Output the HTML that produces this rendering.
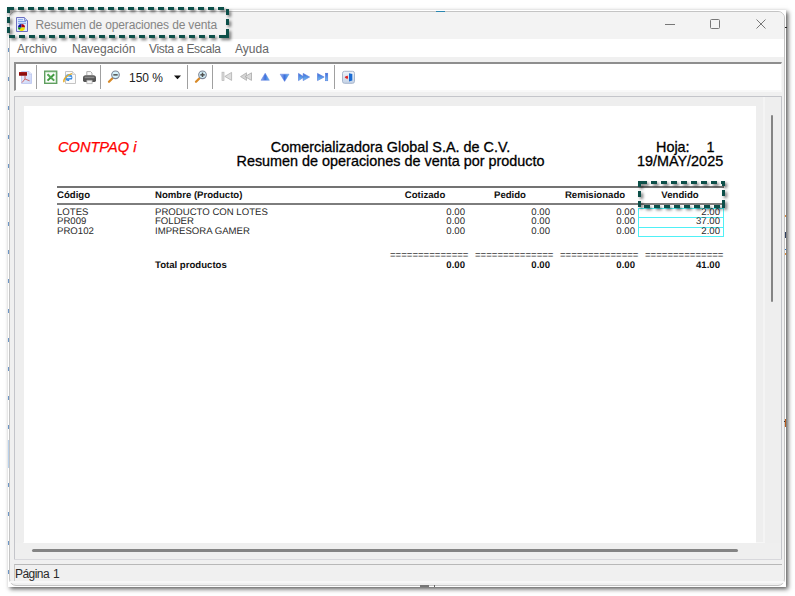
<!DOCTYPE html>
<html><head><meta charset="utf-8">
<style>
*{margin:0;padding:0;box-sizing:border-box}
html,body{width:795px;height:596px;overflow:hidden;background:#fff;font-family:"Liberation Sans",sans-serif;position:relative}
.a{position:absolute}
.t{position:absolute;white-space:nowrap;line-height:1}
#outer{left:8px;top:10px;width:778px;height:577px;background:#fff;box-shadow:2px 2px 4.5px rgba(0,0,0,.66)}
#win{left:9px;top:11px;width:776px;height:575px;border:1px solid #c4c4c4;border-radius:7px;background:#f0f0f0;overflow:hidden}
.r{font-size:14.4px;color:#000;-webkit-text-stroke:0.3px #000}
.h{font-size:9.6px;font-weight:bold;color:#111;text-rendering:geometricPrecision}
.d{font-size:9.6px;color:#2a2a2a;text-rendering:geometricPrecision}
.rt{text-align:right}
</style></head><body>
<div id="outer" class="a"></div>
<div id="win" class="a">
  <div class="a" style="left:0;top:0;width:100%;height:27px;background:#f3f3f3"></div>
  <div class="a" style="left:0;top:27px;width:100%;height:18px;background:#fff"></div>
</div>
<!-- title bar -->
<svg class="a" style="left:16px;top:17px" width="12" height="15" viewBox="0 0 12 15">
  <path d="M0.5 0.5H8.5L11.5 3.5V14.5H0.5Z" fill="#dfeaff" stroke="#6d6fc0"/>
  <path d="M8.5 0.5V3.5H11.5" fill="#bcd0f5" stroke="#8a8fd0"/>
  <rect x="2" y="2.2" width="5" height="1" fill="#7ea4e6"/>
  <rect x="2" y="4" width="8" height="1" fill="#7ea4e6"/>
  <rect x="2" y="5.8" width="8" height="1" fill="#7ea4e6"/>
  <path d="M5.5 10.5L5.5 7A3.5 3.5 0 0 0 2 10.5Z" fill="#0a0aa0"/>
  <path d="M5.5 10.5L5.5 7A3.5 3.5 0 0 1 9 10.5Z" fill="#b00010"/>
  <path d="M5.5 10.5L9 10.5A3.5 3.5 0 0 1 3 13Z" fill="#f0e000"/>
  <path d="M5.5 10.5L3 13A3.5 3.5 0 0 1 2 10.5Z" fill="#0a8a10"/>
</svg>
<div class="t" style="left:35.5px;top:19px;font-size:12px;color:#858585;letter-spacing:-0.15px">Resumen de operaciones de venta</div>
<svg class="a" style="left:660px;top:15px" width="115" height="20">
  <rect x="5" y="9" width="10" height="1" fill="#777"/>
  <rect x="50.5" y="4.5" width="9" height="9" rx="1" fill="none" stroke="#777"/>
  <path d="M96.5 4.5L105.5 13.5M105.5 4.5L96.5 13.5" stroke="#777" stroke-width="1"/>
</svg>
<!-- menu -->
<div class="t" style="left:17px;top:42.5px;font-size:12px;color:#666">Archivo</div>
<div class="t" style="left:72px;top:42.5px;font-size:12px;color:#666">Navegación</div>
<div class="t" style="left:149px;top:42.5px;font-size:12px;color:#666;letter-spacing:-0.3px">Vista a Escala</div>
<div class="t" style="left:235px;top:42.5px;font-size:12px;color:#666">Ayuda</div>
<!-- toolbar box -->
<div class="a" style="left:14px;top:62px;width:768px;height:29px;background:#fff;border-top:2px solid #8e8e8e;border-left:2px solid #8e8e8e;border-right:1px solid #f6f6f6;border-bottom:1px solid #f8f8f8"></div><div class="a" style="left:14px;top:91px;width:768px;height:1px;background:#f8f8f8"></div>
<div class="a" style="left:36px;top:65px;width:1px;height:24px;background:#a0a0a0"></div>
<div class="a" style="left:100px;top:65px;width:1px;height:24px;background:#a0a0a0"></div>
<div class="a" style="left:187px;top:65px;width:1px;height:24px;background:#a0a0a0"></div>
<div class="a" style="left:212px;top:65px;width:1px;height:24px;background:#a0a0a0"></div>
<div class="a" style="left:334px;top:65px;width:1px;height:24px;background:#a0a0a0"></div>
<!-- toolbar icons -->
<svg class="a" style="left:0;top:0" width="400" height="100">
  <defs>
    <linearGradient id="gpdf" x1="0" y1="0" x2="1" y2="1"><stop offset="0" stop-color="#eef2ff"/><stop offset="1" stop-color="#c9d4f6"/></linearGradient>
    <linearGradient id="gblue" x1="0" y1="0" x2="1" y2="0"><stop offset="0" stop-color="#9fb6f0"/><stop offset=".5" stop-color="#3f6fdc"/><stop offset="1" stop-color="#6fc8f0"/></linearGradient>
    <linearGradient id="gblue2" x1="0" y1="0" x2="0" y2="1"><stop offset="0" stop-color="#3a66d8"/><stop offset="1" stop-color="#74c6f2"/></linearGradient>
    <radialGradient id="gie" cx=".4" cy=".35" r=".7"><stop offset="0" stop-color="#8fd0ff"/><stop offset="1" stop-color="#1c6fd0"/></radialGradient>
    <linearGradient id="gexit" x1="0" y1="0" x2="0" y2="1"><stop offset="0" stop-color="#eef3fa"/><stop offset="1" stop-color="#c4d2e6"/></linearGradient>
  </defs>
  <!-- pdf -->
  <path d="M21.5 71.5H29L31.5 74V83.5H21.5Z" fill="url(#gpdf)" stroke="#c4cdf2"/>
  <path d="M29 71.5V74H31.5" fill="#fff" stroke="#b8c2ee" stroke-width=".8"/>
  <rect x="19" y="72" width="8" height="3.8" rx=".6" fill="#8c0a0a"/>
  <rect x="19.5" y="72.2" width="7" height="1" fill="#a82020"/>
  <path d="M25 76V79M25 79L22 82.6M25 79L29.6 80.8" stroke="#c85a5a" stroke-width=".9" fill="none"/>
  <!-- excel -->
  <rect x="44.7" y="71.2" width="12" height="12.1" fill="#fbfefb" stroke="#5f9f5f" stroke-width="1.4"/>
  <path d="M45.6 72.2H55.8V82.4" fill="none" stroke="#8cc48c" stroke-width=".5"/>
  <path d="M47.5 74.2L54.2 80.6M54.2 74.2L47.5 80.6" stroke="#3f9a3f" stroke-width="2"/>
  <path d="M48 74.6L53.8 80.2" stroke="#8fd08f" stroke-width=".5"/>
  <!-- ie -->
  <path d="M65.5 71.5H72.5L75.5 74.5V83.5H65.5Z" fill="#fbfbfb" stroke="#c4c4c4"/>
  <path d="M72.5 71.5V74.5H75.5" fill="#ececec" stroke="#c8c8c8" stroke-width=".8"/>
  <circle cx="68.8" cy="77.6" r="3.5" fill="url(#gie)"/>
  <path d="M67 77.1H71.4V78H67Z" fill="#fff"/>
  <path d="M69.5 79.4H72.4V81H69Z" fill="#fff"/>
  <path d="M64 82.3C62.8 80 66.5 74.6 72 73.6" stroke="#e6ac28" stroke-width="1.3" fill="none"/>
  <!-- printer -->
  <path d="M86.8 75V71.6H90.6L92 73V75" fill="#fafafa" stroke="#9a9a9a" stroke-width=".8"/>
  <path d="M83 78Q83 75.3 85.8 75.3H93.2Q96 75.3 96 78V80.6Q96 82 94.6 82H84.4Q83 82 83 80.6Z" fill="#555"/>
  <rect x="84.6" y="76.6" width="9.8" height="1.6" fill="#8c8c8c"/>
  <path d="M86.8 80.2H92.2V83.6H86.8Z" fill="#f4f4f4" stroke="#999" stroke-width=".6"/>
  <!-- zoom out -->
  <path d="M112.5 78.2L109 81.8" stroke="#d88a28" stroke-width="2.3" stroke-linecap="round"/>
  <circle cx="115.5" cy="74.8" r="3.8" fill="#d6f2fb" stroke="#7c8496" stroke-width="1.1"/>
  <rect x="113.3" y="74.1" width="4.4" height="1.5" fill="#505050"/>
  <!-- dropdown -->
  <path d="M174 75.5H181L177.5 79.3Z" fill="#111"/>
  <!-- zoom in -->
  <path d="M199.5 78.2L196 81.8" stroke="#d88a28" stroke-width="2.3" stroke-linecap="round"/>
  <circle cx="202.5" cy="74.8" r="3.8" fill="#d6f2fb" stroke="#7c8496" stroke-width="1.1"/>
  <rect x="200.3" y="74.1" width="4.4" height="1.5" fill="#505050"/>
  <rect x="201.75" y="72.6" width="1.5" height="4.4" fill="#505050"/>
  <!-- first -->
  <rect x="222" y="72.2" width="2" height="8.4" fill="#dcdcdc" stroke="#b4b4b4" stroke-width=".7"/>
  <path d="M224.8 76.4L231.6 72.4V80.4Z" fill="#dedede" stroke="#b0b0b0" stroke-width=".8"/>
  <!-- prev -->
  <path d="M240.5 76.6L246.5 72.8V80.4Z" fill="#d4d4d4" stroke="#b0b0b0" stroke-width=".8"/>
  <path d="M245 76.6L251.5 72.8V80.4Z" fill="#dadada" stroke="#aaaaaa" stroke-width=".8"/>
  <!-- up -->
  <path d="M265.2 73.2L269.3 80.3H261Z" fill="url(#gblue)" stroke="#5a7ee0" stroke-width=".5"/>
  <!-- down -->
  <path d="M280.2 74.2H289L284.6 81.4Z" fill="url(#gblue)" stroke="#5a7ee0" stroke-width=".5"/>
  <!-- next -->
  <path d="M298.5 73.4V80.6L304 77Z" fill="url(#gblue2)" stroke="#4f74dc" stroke-width=".6"/>
  <path d="M303.2 73.4V80.6L309.6 77Z" fill="url(#gblue2)" stroke="#4f74dc" stroke-width=".6"/>
  <!-- last -->
  <path d="M317.5 73.4V80.6L324.2 77Z" fill="url(#gblue2)" stroke="#4f74dc" stroke-width=".6"/>
  <rect x="325.4" y="73.2" width="2.4" height="7.6" fill="url(#gblue2)" stroke="#4f74dc" stroke-width=".5"/>
  <!-- exit -->
  <rect x="342.5" y="71.3" width="12" height="12" rx="2" fill="url(#gexit)" stroke="#a8b6cc" stroke-width="1"/>
  <path d="M349 73.2L352.3 74V80.6L349 81.4Z" fill="#1a6cd4"/>
  <path d="M344.6 77.3L347.6 75.4V79.2Z" fill="#e02424"/>
  <rect x="345.5" y="76.4" width="2.5" height="1.8" fill="#e02424"/>
</svg>
<div class="t" style="left:129px;top:72px;font-size:12px;color:#222">150 %</div>
<!-- preview frame -->
<div class="a" style="left:14px;top:96px;width:768px;height:464px;background:#eeeeee;border:1px solid #c4c5ca"></div>
<div class="a" style="left:763px;top:97px;width:2px;height:446px;background:#f4f4f4"></div><div class="a" style="left:15px;top:543px;width:766px;height:16px;background:#efefef"></div><div class="a" style="left:23px;top:542px;width:742px;height:1px;background:#f6f6f6"></div>
<div class="a" style="left:770.5px;top:115px;width:2.5px;height:187px;background:#848484;border-radius:1.5px"></div>
<div class="a" style="left:32px;top:549px;width:706px;height:2.5px;background:#848484;border-radius:1.5px"></div>
<!-- page -->
<div class="a" style="left:23.5px;top:106px;width:732.5px;height:437px;background:#fff"></div>
<!-- report -->
<div class="t" style="left:58px;top:139.5px;font-size:14.6px;font-style:italic;color:#ff0000;-webkit-text-stroke:0.25px #f00">CONTPAQ i</div>
<div class="t r" style="left:190px;width:401px;text-align:center;top:139.5px">Comercializadora Global S.A. de C.V.</div>
<div class="t r" style="left:190px;width:401px;text-align:center;top:153.5px">Resumen de operaciones de venta por producto</div>
<div class="t r" style="left:656px;top:139.5px">Hoja:</div>
<div class="t r" style="left:706.5px;top:139.5px">1</div>
<div class="t r" style="left:637px;top:153.5px">19/MAY/2025</div>
<div class="a" style="left:57px;top:186px;width:667px;height:2px;background:#737373"></div>
<div class="a" style="left:57px;top:203px;width:667px;height:2px;background:#7d7d7d"></div>
<div class="t h" style="left:57px;top:191px">Código</div>
<div class="t h" style="left:155px;top:191px">Nombre (Producto)</div>
<div class="t h" style="left:385px;width:80px;text-align:center;top:191px">Cotizado</div>
<div class="t h" style="left:470px;width:80px;text-align:center;top:191px">Pedido</div>
<div class="t h" style="left:555px;width:80px;text-align:center;top:191px">Remisionado</div>
<div class="t h" style="left:640px;width:80px;text-align:center;top:191px">Vendido</div>
<div class="t d" style="left:57px;top:207.5px;line-height:9.5px">LOTES<br>PR009<br>PRO102</div>
<div class="t d" style="left:155px;top:207.5px;line-height:9.5px">PRODUCTO CON LOTES<br>FOLDER<br>IMPRESORA GAMER</div>
<div class="t d rt" style="left:385px;width:80px;top:207.5px;line-height:9.5px">0.00<br>0.00<br>0.00</div>
<div class="t d rt" style="left:470px;width:80px;top:207.5px;line-height:9.5px">0.00<br>0.00<br>0.00</div>
<div class="t d rt" style="left:555px;width:80px;top:207.5px;line-height:9.5px">0.00<br>0.00<br>0.00</div>
<div class="a" style="left:638px;top:208px;width:86px;height:29px;border:1px solid #4ff0f6"></div>
<div class="a" style="left:638px;top:217px;width:86px;height:1px;background:#4ff0f6"></div>
<div class="a" style="left:638px;top:227px;width:86px;height:1px;background:#4ff0f6"></div>
<div class="t d rt" style="left:640px;width:80px;top:207.5px;line-height:9.5px">2.00<br>37.00<br>2.00</div>
<div class="t d" style="left:390px;top:251px;color:#3a3a3a">==============</div>
<div class="t d" style="left:475px;top:251px;color:#3a3a3a">==============</div>
<div class="t d" style="left:560px;top:251px;color:#3a3a3a">==============</div>
<div class="t d" style="left:645px;top:251px;color:#3a3a3a">==============</div>
<div class="t h" style="left:155px;top:260.5px">Total productos</div>
<div class="t h rt" style="left:385px;width:80px;top:260.5px">0.00</div>
<div class="t h rt" style="left:470px;width:80px;top:260.5px">0.00</div>
<div class="t h rt" style="left:555px;width:80px;top:260.5px">0.00</div>
<div class="t h rt" style="left:640px;width:80px;top:260.5px">41.00</div>
<!-- status -->
<div class="a" style="left:14px;top:564px;width:768px;height:17px;border-top:1px solid #b8b8b8;border-left:1px solid #c8c8c8"></div><div class="a" style="left:10px;top:581px;width:774px;height:2px;background:#f8f8f8"></div><div class="a" style="left:14px;top:559px;width:768px;height:1px;background:#d8d8dc"></div>
<div class="t" style="left:15px;top:568px;font-size:12px;color:#2a2a2a;letter-spacing:-0.55px">Página</div><div class="t" style="left:53px;top:568px;font-size:12px;color:#2a2a2a">1</div>
<!-- artifacts -->
<div class="a" style="left:8px;top:48px;width:1.2px;height:4px;background:#6d96c6"></div><div class="a" style="left:8px;top:77px;width:1.2px;height:4px;background:#6d96c6"></div><div class="a" style="left:8px;top:106px;width:1.2px;height:4px;background:#6d96c6"></div><div class="a" style="left:8px;top:135px;width:1.2px;height:4px;background:#6d96c6"></div><div class="a" style="left:8px;top:163.5px;width:1.2px;height:4px;background:#6d96c6"></div><div class="a" style="left:8px;top:192.5px;width:1.2px;height:4px;background:#6d96c6"></div><div class="a" style="left:8px;top:222px;width:1.2px;height:4px;background:#6d96c6"></div><div class="a" style="left:8px;top:250px;width:1.2px;height:4px;background:#6d96c6"></div><div class="a" style="left:8px;top:279px;width:1.2px;height:4px;background:#6d96c6"></div><div class="a" style="left:8px;top:308.5px;width:1.2px;height:4px;background:#6d96c6"></div><div class="a" style="left:8px;top:337.5px;width:1.2px;height:4px;background:#6d96c6"></div><div class="a" style="left:8px;top:367px;width:1.2px;height:4px;background:#6d96c6"></div><div class="a" style="left:8px;top:396px;width:1.2px;height:4px;background:#6d96c6"></div><div class="a" style="left:8px;top:425px;width:1.2px;height:4px;background:#6d96c6"></div><div class="a" style="left:8px;top:453px;width:1.2px;height:4px;background:#6d96c6"></div><div class="a" style="left:8px;top:483px;width:1.2px;height:4px;background:#6d96c6"></div><div class="a" style="left:8px;top:511.5px;width:1.2px;height:4px;background:#6d96c6"></div><div class="a" style="left:8px;top:541px;width:1.2px;height:4px;background:#6d96c6"></div><div class="a" style="left:8px;top:569.5px;width:1.2px;height:4px;background:#6d96c6"></div><div class="a" style="left:8px;top:440px;width:1px;height:28px;background:#b8d0ea"></div><div class="a" style="left:436px;top:10.5px;width:9px;height:1.5px;background:#2a86b0"></div><div class="a" style="left:420px;top:585px;width:9px;height:1.5px;background:#777"></div><div class="a" style="left:434px;top:585px;width:1px;height:1.5px;background:#666"></div><div class="a" style="left:785px;top:27px;width:2px;height:1px;background:#222"></div><div class="a" style="left:785px;top:215px;width:1px;height:2px;background:#e09040"></div><div class="a" style="left:784.5px;top:232px;width:1.5px;height:6px;background:#304060"></div><div class="a" style="left:784.5px;top:249px;width:1px;height:1px;background:#3070c0"></div><div class="a" style="left:785px;top:253px;width:1px;height:2px;background:#e09040"></div><div class="a" style="left:785px;top:419px;width:1px;height:8px;background:#b85a1a"></div><div class="a" style="left:784px;top:421px;width:1px;height:1px;background:#333"></div>
<!-- annotation boxes -->
<svg class="a" style="left:0;top:0" width="795" height="596">
  <defs><filter id="sh" x="-10%" y="-50%" width="120%" height="200%"><feDropShadow dx="2" dy="2" stdDeviation="1.6" flood-color="#000" flood-opacity="0.55"/></filter></defs>
  <g fill="#0c4f4a" filter="url(#sh)"><rect x="8" y="7" width="6" height="3"/><rect x="18" y="7" width="6" height="3"/><rect x="28" y="7" width="6" height="3"/><rect x="38" y="7" width="6" height="3"/><rect x="48" y="7" width="6" height="3"/><rect x="58" y="7" width="6" height="3"/><rect x="68" y="7" width="6" height="3"/><rect x="78" y="7" width="6" height="3"/><rect x="88" y="7" width="6" height="3"/><rect x="98" y="7" width="6" height="3"/><rect x="108" y="7" width="6" height="3"/><rect x="118" y="7" width="6" height="3"/><rect x="128" y="7" width="6" height="3"/><rect x="138" y="7" width="6" height="3"/><rect x="148" y="7" width="6" height="3"/><rect x="158" y="7" width="6" height="3"/><rect x="168" y="7" width="6" height="3"/><rect x="178" y="7" width="6" height="3"/><rect x="188" y="7" width="6" height="3"/><rect x="198" y="7" width="6" height="3"/><rect x="208" y="7" width="6" height="3"/><rect x="218" y="7" width="6" height="3"/><rect x="226" y="9" width="3" height="6"/><rect x="226" y="19" width="3" height="6"/><rect x="226" y="29" width="3" height="6"/><rect x="9" y="35" width="6" height="3"/><rect x="19" y="35" width="6" height="3"/><rect x="29" y="35" width="6" height="3"/><rect x="39" y="35" width="6" height="3"/><rect x="49" y="35" width="6" height="3"/><rect x="59" y="35" width="6" height="3"/><rect x="69" y="35" width="6" height="3"/><rect x="79" y="35" width="6" height="3"/><rect x="89" y="35" width="6" height="3"/><rect x="99" y="35" width="6" height="3"/><rect x="109" y="35" width="6" height="3"/><rect x="119" y="35" width="6" height="3"/><rect x="129" y="35" width="6" height="3"/><rect x="139" y="35" width="6" height="3"/><rect x="149" y="35" width="6" height="3"/><rect x="159" y="35" width="6" height="3"/><rect x="169" y="35" width="6" height="3"/><rect x="179" y="35" width="6" height="3"/><rect x="189" y="35" width="6" height="3"/><rect x="199" y="35" width="6" height="3"/><rect x="209" y="35" width="6" height="3"/><rect x="219" y="35" width="10" height="3"/><rect x="7" y="7" width="3" height="6"/><rect x="7" y="17" width="3" height="6"/><rect x="7" y="27" width="3" height="6"/></g>
  <g fill="#0c4f4a" filter="url(#sh)"><rect x="638" y="181" width="9" height="3"/><rect x="651" y="181" width="6" height="3"/><rect x="661" y="181" width="6" height="3"/><rect x="671" y="181" width="6" height="3"/><rect x="681" y="181" width="6" height="3"/><rect x="691" y="181" width="6" height="3"/><rect x="701" y="181" width="6" height="3"/><rect x="711" y="181" width="6" height="3"/><rect x="721" y="181" width="4" height="3"/><rect x="722" y="181" width="3" height="5"/><rect x="722" y="190" width="3" height="6"/><rect x="722" y="200" width="3" height="8"/><rect x="644" y="205" width="6" height="3"/><rect x="654" y="205" width="6" height="3"/><rect x="664" y="205" width="6" height="3"/><rect x="674" y="205" width="6" height="3"/><rect x="684" y="205" width="6" height="3"/><rect x="694" y="205" width="6" height="3"/><rect x="704" y="205" width="6" height="3"/><rect x="714" y="205" width="6" height="3"/><rect x="638" y="181" width="3" height="6"/><rect x="638" y="191" width="3" height="6"/><rect x="638" y="201" width="3" height="6"/></g>
</svg>
</body></html>
